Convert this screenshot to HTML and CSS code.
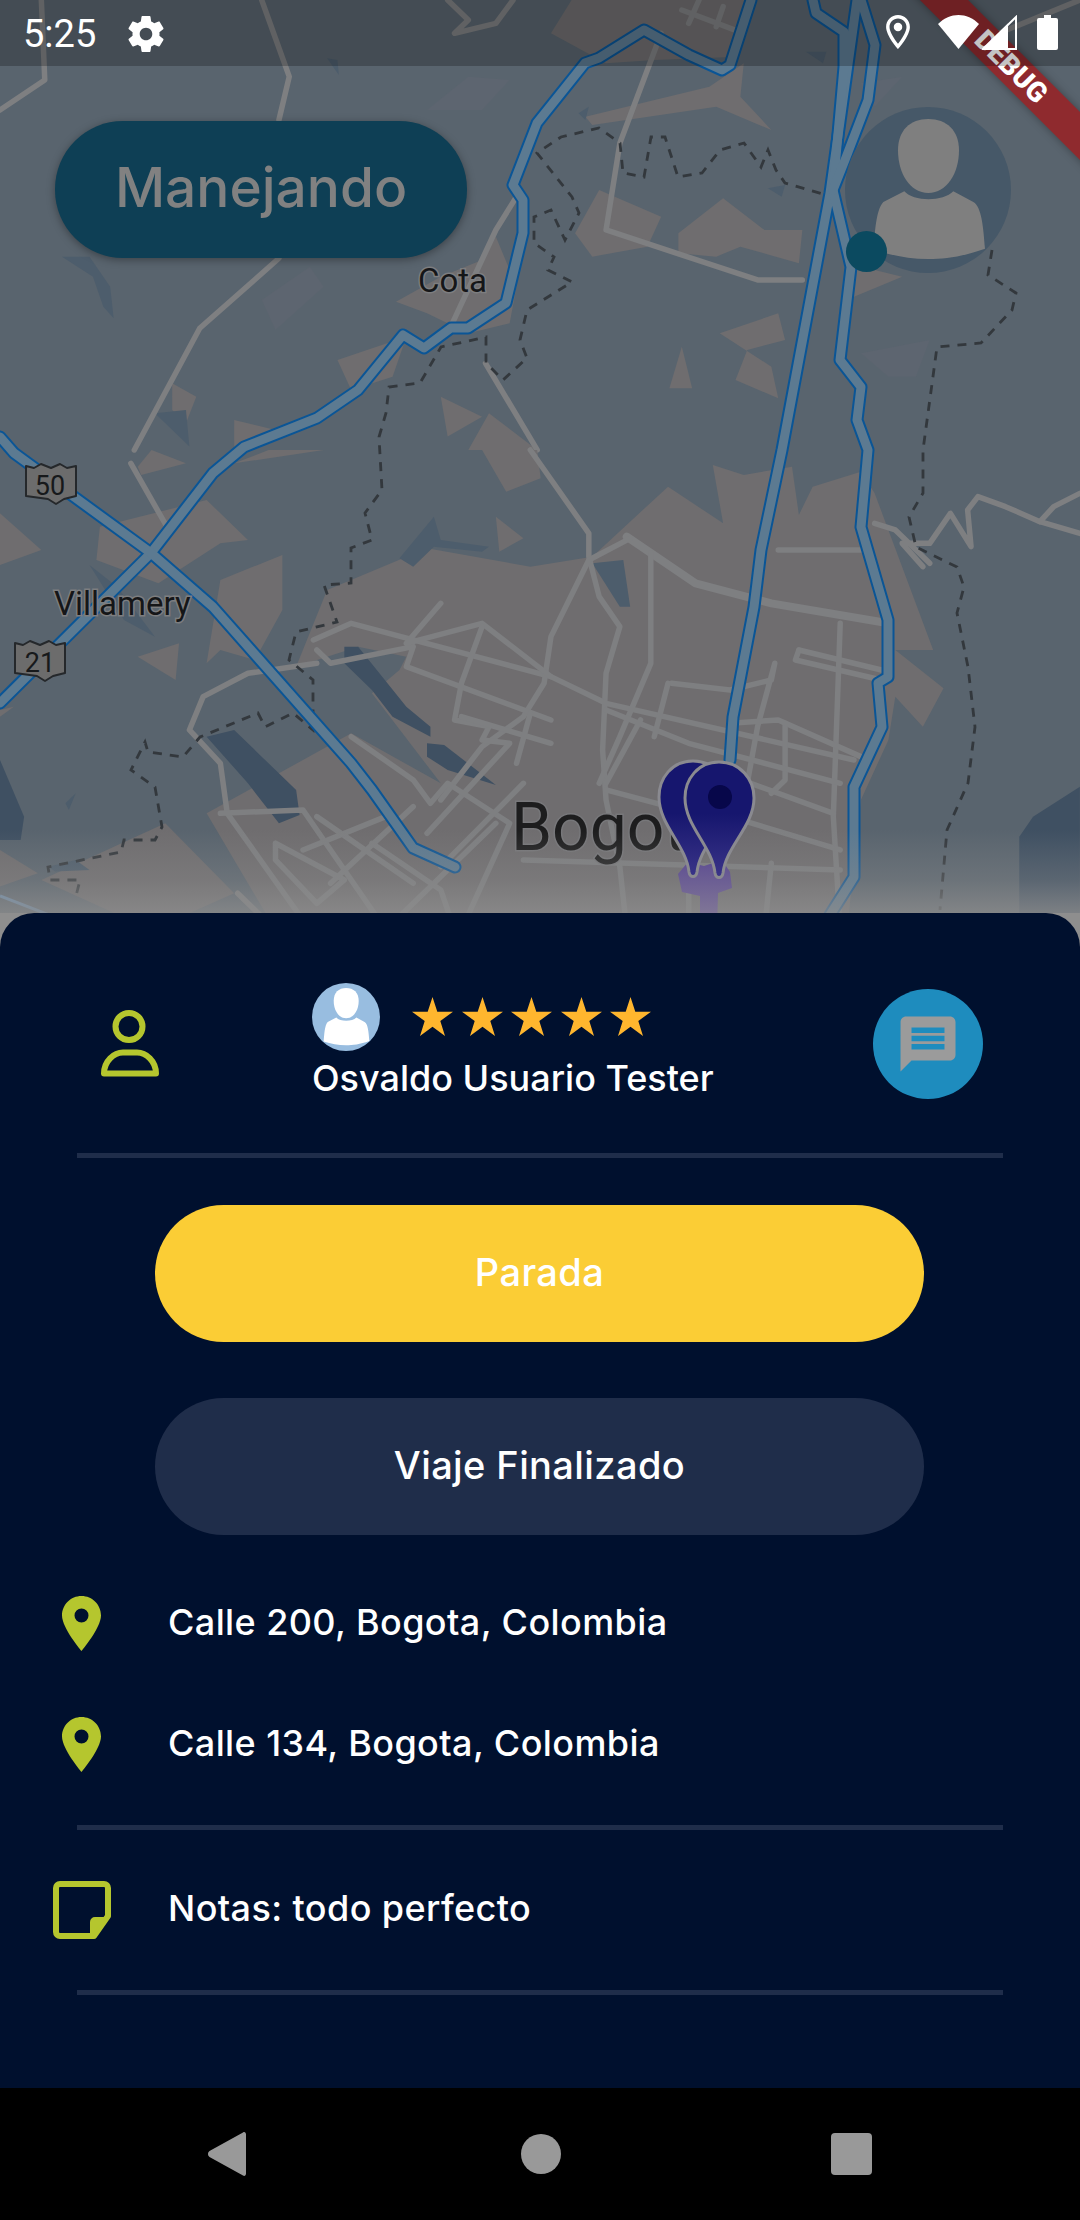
FILE: index.html
```html
<!DOCTYPE html>
<html lang="es">
<head>
<meta charset="utf-8">
<title>Manejando</title>
<link rel="stylesheet" href="styles.css">
</head>
<body>
<svg class="defs" width="0" height="0" aria-hidden="true">
  <defs>
    <symbol id="silhouette" viewBox="0 0 498 498">
      <path d="M250 36C195 36 159 70 159 130C159 200 195 258 250 258C305 258 342 200 342 130C342 70 305 36 250 36Z"/>
      <path d="M178 253C205 285 295 285 325 253L385 285C410 300 415 360 420 425C350 450 300 456 250 456C190 456 140 445 85 428C90 380 92 310 115 285Z"/>
    </symbol>
    <symbol id="star" viewBox="0 0 41 39">
      <polygon points="20.5,0 25.3,14.7 41,14.7 28.3,24 33,39 20.5,29.7 8,39 12.7,24 0,14.7 15.7,14.7"/>
    </symbol>
    <symbol id="pin" viewBox="0 0 39 55">
      <path fill-rule="evenodd" d="M19.5 0C8.7 0 0 8.7 0 19.5C0 32 19.5 55 19.5 55S39 32 39 19.5C39 8.7 30.3 0 19.5 0ZM19.5 12.5a7 7 0 1 1 0 14a7 7 0 1 1 0-14Z"/>
    </symbol>
    <linearGradient id="fade" x1="0" y1="0" x2="0" y2="1">
      <stop offset="0" stop-color="#8e8e8e" stop-opacity="0"/>
      <stop offset="0.5" stop-color="#8e8e8e" stop-opacity="0.35"/>
      <stop offset="1" stop-color="#8e8e8e" stop-opacity="1"/>
    </linearGradient>
    <linearGradient id="pinfill" x1="0" y1="0" x2="0" y2="1">
      <stop offset="0.45" stop-color="#16166e"/>
      <stop offset="1" stop-color="#3a3488"/>
    </linearGradient>
    <linearGradient id="blob" x1="0" y1="0" x2="0" y2="1">
      <stop offset="0" stop-color="#5f4f92"/>
      <stop offset="1" stop-color="#8a8298"/>
    </linearGradient>
  </defs>
</svg>

<div class="screen">
  <section class="map">
    <svg class="map-art" viewBox="0 0 1080 930" width="1080" height="930" aria-hidden="true">
      <rect class="land" x="0" y="0" width="1080" height="930"/>

      <!-- upper part: coordinates in a 1568x1350 space -->
      <g transform="scale(0.6887 0.3333)">
        <g class="urban">
          <polygon points="800,100 830,0 1090,0 1070,170 950,180 880,190"/>
          <polygon points="850,350 1030,260 1080,190 1075,290 1120,390 1040,320 860,375"/>
          <polygon points="870,570 960,650 940,740 860,770 835,700"/>
          <polygon points="1050,595 1110,690 1165,690 1160,790 1075,740 1040,770 985,760 985,700"/>
          <polygon points="720,710 750,860 740,970 680,1000 620,940 575,905 640,830 700,780"/>
          <polygon points="1045,1000 1130,940 1140,1020 1085,1050 1068,1140 1130,1195 1120,1100"/>
          <polygon points="990,1040 1005,1165 972,1165"/>
          <polygon points="1230,790 1310,830 1240,890"/>
          <polygon points="640,1190 700,1250 650,1310"/>
          <polygon points="490,1080 590,1010 570,1130 510,1170"/>
          <polygon points="710,1240 780,1350 680,1350"/>
          <polygon points="250,1150 285,1190 270,1270 250,1230"/>
          <polygon points="340,1260 400,1290 340,1350"/>
        </g>
        <g class="hill">
          <polygon points="90,770 130,770 160,860 165,955 150,920 135,830"/>
          <polygon points="1115,565 1140,555 1135,590"/>
          <polygon points="475,175 490,180 492,225"/>
          <polygon points="840,340 855,320 850,360"/>
          <polygon points="225,1240 270,1230 275,1340"/>
          <polygon points="1170,155 1200,155 1195,190"/>
        </g>
        <g class="hill-soft">
          <polygon points="620,330 680,230 740,240 700,330"/>
          <polygon points="380,900 450,800 470,860 400,990"/>
          <polygon points="1250,1060 1350,1020 1330,1130 1290,1130"/>
          <polygon points="1250,250 1310,230 1270,320"/>
        </g>
        <g class="road">
          <polyline points="380,0 420,230 405,360"/>
          <polyline points="405,775 290,985 195,1350"/>
          <polyline points="60,0 65,240 0,330"/>
          <polyline points="650,0 680,60 660,100 720,70 745,0"/>
          <polyline points="960,100 900,430 880,690 1100,840 1165,840"/>
          <polyline points="705,1090 780,1350"/>
          <polyline points="650,1000 720,690 750,590"/>
          <polyline points="990,30 1080,100"/>
          <polyline points="1015,0 1000,70"/>
          <polyline points="1050,20 1040,80"/>
          <polyline points="1450,100 1568,0"/>
        </g>
      </g>

      <!-- lower part: coordinates in a 1568x1440 space -->
      <g transform="translate(0 450) scale(0.6887 0.3333)">
        <g class="urban">
          <polygon points="475,420 620,295 770,350 860,320 970,110 1050,220 1035,45 1080,75 1150,50 1160,195 1180,110 1250,65 1270,130 1355,600 1300,600 1370,715 1340,830 1300,740 1290,870 1250,1050 1230,1440 400,1440 300,1090 510,850 640,1000 540,730 580,660 590,620 520,590 430,650"/>
          <polygon points="0,190 60,300 0,345"/>
          <polygon points="200,50 220,0 270,40 205,75"/>
          <polygon points="145,230 300,150 360,270 320,280 230,400 140,330"/>
          <polygon points="320,390 410,315 410,480 370,630 320,600 300,640"/>
          <polygon points="720,200 760,265 725,305"/>
          <polygon points="700,0 780,0 785,85 735,125"/>
          <polygon points="200,620 260,580 255,690"/>
          <polygon points="240,1120 340,1330 220,1440 60,1290"/>
          <polygon points="0,1200 55,1270 0,1310"/>
          <polygon points="390,0 470,0 340,40"/>
          <polygon points="0,780 20,770 0,800"/>
        </g>
        <g class="water">
          <polygon points="500,590 520,590 590,770 625,830 625,860 570,800 540,720 500,640"/>
          <polygon points="620,880 645,885 720,1005 650,960 620,920"/>
          <polygon points="300,860 340,840 380,920 430,1020 435,1095 405,1120 360,1000"/>
          <polygon points="1500,1100 1568,1010 1568,1440 1480,1440 1480,1160"/>
          <polygon points="0,930 35,1100 30,1170 0,1170"/>
        </g>
        <g class="hill">
          <polygon points="130,345 170,410 225,560 180,510"/>
          <polygon points="580,325 630,200 640,270 710,290 700,305 630,290 600,350"/>
          <polygon points="860,340 905,330 915,470 900,470"/>
          <polygon points="95,1060 110,1030 100,1080"/>
          <polygon points="70,1250 110,1230 130,1260 80,1265"/>
        </g>
        <g class="road">
          <polyline points="770,0 855,250 855,320 870,440 900,530 880,670 875,900 880,1050 900,1250 910,1440"/>
          <polyline points="455,570 510,520 800,680 880,760 1240,930"/>
          <polyline class="wide" points="910,260 1010,400 1120,460 1290,520"/>
          <polyline points="915,265 855,330 800,560 790,700 760,800 700,890 640,1050"/>
          <polyline points="945,310 945,640 900,860 870,1000"/>
          <polyline points="460,600 480,640 600,590 590,650 800,810"/>
          <polyline points="640,460 590,580 700,520 800,680"/>
          <polyline points="700,530 670,700 660,810 710,830 700,870 740,880 620,1150"/>
          <polyline points="975,700 1060,720 1120,690 1125,640 1100,830 1085,1000"/>
          <polyline points="1160,600 1280,660"/>
          <polyline points="1160,600 1155,630 1280,690"/>
          <polyline points="1220,520 1210,1100 1220,1440"/>
          <polyline points="1130,300 1250,300"/>
          <polyline points="190,40 245,240"/>
          <polyline points="460,640 360,670 295,740 275,840 320,940 330,1090 450,1440"/>
          <polyline points="510,860 600,990 625,1060 650,1000 740,1120 670,1440"/>
          <polyline points="320,1090 440,1080 560,1440"/>
          <polyline points="460,1100 600,1300"/>
          <polyline points="400,1180 500,1290 460,1360 400,1230 400,1180"/>
          <polyline points="1060,1100 1220,1200"/>
          <polyline points="760,1230 1220,1260"/>
          <polyline points="1140,820 1140,990 1120,1030"/>
          <polyline points="880,780 1000,880 1220,1000"/>
          <polyline points="1060,820 1130,810 1250,920"/>
          <polyline points="1568,130 1530,170 1510,215 1460,170 1420,140 1405,180 1410,290 1380,190 1350,280 1310,280 1340,350"/>
          <polyline points="1510,215 1568,250"/>
          <polyline points="1270,220 1300,240 1350,340"/>
          <polyline points="345,1330 400,1440"/>
          <polyline points="540,1180 640,1320 660,1440"/>
          <polyline points="720,1120 560,1440"/>
          <polyline points="670,800 800,880"/>
          <polyline points="770,790 750,940"/>
          <polyline points="930,810 880,1000"/>
          <polyline points="970,700 950,860"/>
          <polyline points="440,1200 560,1100"/>
          <polyline points="600,1070 480,1300"/>
          <polyline points="760,1000 640,1250"/>
          <polyline points="1090,1000 1210,1090"/>
          <polyline points="880,1020 1080,1130"/>
          <polyline points="1000,1200 1000,1440"/>
          <polyline points="1120,1240 1110,1440"/>
        </g>
      </g>

      <polyline class="trail" points="837,198 785,183 776,170 768,150 761,167 744,143 720,150 702,173 678,177 665,137 651,137 644,177 623,173 620,143 599,128 561,137 537,153 572,197 579,213 565,240 551,210 534,217 534,243 554,257 548,270 572,282 527,310 520,340 527,358 503,380 486,363 486,337 441,347 420,383 389,387 386,413 379,437 382,490 365,513 372,540 351,548 351,583 324,585 337,622 296,632 289,660 313,680 313,730 293,713 265,727 258,713 200,737 183,757 148,752 145,742 131,770 155,787 162,827 155,840 124,840 121,852 48,867 50,880 80,880 75,900"/>
      <polyline class="trail" points="992,250 988,275 1016,293 1012,310 981,343 937,347 923,450 923,493 909,517 916,547 957,567 964,587 957,613 968,667 975,727 968,783 947,830 940,910"/>

      <g>
        <polyline class="hw-out" points="751,0 730,65 722,70 689,55 644,30 599,58 585,63 537,123 513,185 523,200 523,233 506,303 468,328 451,328 424,348 403,335 358,390 317,418 244,447 213,473 151,553 0,703"/>
        <polyline class="hw-out" points="0,437 14,453 151,553 213,607 351,763 372,790 413,848 455,867"/>
        <polyline class="hw-out" points="857,0 830,193 782,450 761,550 754,607 733,717 730,760"/>
        <polyline class="hw-out" points="813,0 816,13 844,32 844,67 833,190 851,267 840,360 861,387 857,420 868,450 861,527 888,620 888,677 878,683 882,727 854,787 854,877 830,915"/>
        <polyline class="hw-out" points="861,0 875,45 868,100 845,160 833,190"/>
        <polyline class="hw-in" points="751,0 730,65 722,70 689,55 644,30 599,58 585,63 537,123 513,185 523,200 523,233 506,303 468,328 451,328 424,348 403,335 358,390 317,418 244,447 213,473 151,553 0,703"/>
        <polyline class="hw-in" points="0,437 14,453 151,553 213,607 351,763 372,790 413,848 455,867"/>
        <polyline class="hw-in" points="857,0 830,193 782,450 761,550 754,607 733,717 730,760"/>
        <polyline class="hw-in" points="813,0 816,13 844,32 844,67 833,190 851,267 840,360 861,387 857,420 868,450 861,527 888,620 888,677 878,683 882,727 854,787 854,877 830,915"/>
        <polyline class="hw-in" points="861,0 875,45 868,100 845,160 833,190"/>
      </g>

      <path class="hw-faint" d="M0 896L70 923"/>

      <g class="shield">
        <path d="M26 466l8 2l7-4l10 4l9-4l7 4l9-2v30l-12 3l-8 5l-8-5l-22-3Z"/>
        <path d="M15 643l8 2l7-4l10 4l9-4l7 4l9-2v30l-12 3l-8 5l-8-5l-22-3Z"/>
      </g>
      <text class="shield-num" x="50" y="495">50</text>
      <text class="shield-num" x="40" y="672">21</text>
      <text class="label" x="418" y="292">Cota</text>
      <text class="label" x="54" y="615">Villamery</text>
      <text class="label city" x="511" y="850">Bogot</text>

      <rect x="0" y="830" width="1080" height="100" fill="url(#fade)"/>

      <path class="blob" d="M688 862L704 866L722 860L730 872L732 888L718 893L717 930H700V896L682 892L678 874Z"/>
      <path class="pin-shape" d="M693 761C672 761 659 778 659 797C659 825 686 845 689 872C690 878 696 878 697 872C700 845 728 825 728 797C728 778 714 761 693 761Z"/>
      <path class="pin-shape" d="M719 762C698 762 685 779 685 798C685 826 712 846 715 873C716 879 722 879 723 873C726 846 754 826 754 798C754 779 740 762 719 762Z"/>
      <circle class="pin-hole" cx="720" cy="797" r="12"/>
    </svg>

    <div class="debug-ribbon"><span>DEBUG</span></div>

    <header class="status-bar">
      <span class="clock">5:25</span>
      <svg class="ic-gear" viewBox="2 2 20 20" aria-hidden="true"><path d="M19.43 12.98c.04-.32.07-.64.07-.98s-.03-.66-.07-.98l2.11-1.65c.19-.15.24-.42.12-.64l-2-3.46c-.12-.22-.39-.3-.61-.22l-2.49 1c-.52-.4-1.08-.73-1.69-.98l-.38-2.65C14.46 2.18 14.25 2 14 2h-4c-.25 0-.46.18-.49.42l-.38 2.65c-.61.25-1.17.59-1.69.98l-2.49-1c-.23-.09-.49 0-.61.22l-2 3.46c-.13.22-.07.49.12.64l2.11 1.65c-.04.32-.07.65-.07.98s.03.66.07.98l-2.11 1.65c-.19.15-.24.42-.12.64l2 3.46c.12.22.39.3.61.22l2.49-1c.52.4 1.08.73 1.69.98l.38 2.65c.03.24.24.42.49.42h4c.25 0 .46-.18.49-.42l.38-2.65c.61-.25 1.17-.59 1.69-.98l2.49 1c.23.09.49 0 .61-.22l2-3.46c.12-.22.07-.49-.12-.64l-2.11-1.65zM12 15.5c-1.93 0-3.5-1.57-3.5-3.5s1.57-3.5 3.5-3.5 3.5 1.57 3.5 3.5-1.57 3.5-3.5 3.5z"/></svg>
      <span class="status-spacer"></span>
      <svg class="ic-loc" viewBox="5 2 14 20" aria-hidden="true"><path fill-rule="evenodd" d="M12 2C8.13 2 5 5.13 5 9c0 5.25 7 13 7 13s7-7.75 7-13c0-3.87-3.13-7-7-7zM7 9c0-2.76 2.24-5 5-5s5 2.24 5 5c0 2.88-2.88 7.19-5 9.88C9.92 16.21 7 11.85 7 9z"/><circle cx="12" cy="9" r="2.5"/></svg>
      <svg class="ic-wifi" viewBox="0 0 41 34" aria-hidden="true"><path d="M0 9C12-3 29-3 41 9L20.5 34Z"/></svg>
      <svg class="ic-signal" viewBox="0 0 35 35" aria-hidden="true"><path d="M0 34.5L26 8.500V34.5Z"/><path class="sig-line" d="M1 34H34V2Z"/></svg>
      <svg class="ic-batt" viewBox="0 0 21 35" aria-hidden="true"><path d="M7 0h7v3h5a2 2 0 0 1 2 2v28a2 2 0 0 1-2 2H2a2 2 0 0 1-2-2V5a2 2 0 0 1 2-2h5Z"/></svg>
    </header>

    <div class="mode-pill">Manejando</div>
    <div class="map-avatar">
      <svg class="map-avatar-fig" aria-hidden="true"><use href="#silhouette"/></svg>
      <span class="map-avatar-dot"></span>
    </div>
  </section>

  <section class="sheet">
    <div class="driver-row">
      <svg class="ic-person" viewBox="0 0 58 67" aria-hidden="true">
        <circle cx="28" cy="16.5" r="13.5"/>
        <path d="M3 63.5C3 51 13 42.5 22 42.5H36C45 42.500 55 51 55 63.5Z"/>
      </svg>
      <div class="driver">
        <div class="driver-top">
          <svg class="driver-avatar" aria-hidden="true"><use href="#silhouette"/></svg>
          <div class="stars">
            <svg class="star" aria-hidden="true"><use href="#star"/></svg>
            <svg class="star" aria-hidden="true"><use href="#star"/></svg>
            <svg class="star" aria-hidden="true"><use href="#star"/></svg>
            <svg class="star" aria-hidden="true"><use href="#star"/></svg>
            <svg class="star" aria-hidden="true"><use href="#star"/></svg>
          </div>
        </div>
        <div class="driver-name">Osvaldo Usuario Tester</div>
      </div>
      <div class="chat-btn">
        <svg class="ic-chat" viewBox="0 0 24 24" aria-hidden="true"><path d="M20 2H4c-1.1 0-1.99.9-1.99 2L2 22l4-4h14c1.1 0 2-.9 2-2V4c0-1.1-.9-2-2-2zm-2 12H6v-2h12v2zm0-3H6V9h12v2zm0-3H6V6h12v2z"/></svg>
      </div>
    </div>
    <hr class="divider">
    <button class="btn btn-stop" type="button">Parada</button>
    <button class="btn btn-end" type="button">Viaje Finalizado</button>
    <div class="info-row first">
      <svg class="ic-pin" aria-hidden="true"><use href="#pin"/></svg>
      <span class="info-text">Calle 200, Bogota, Colombia</span>
    </div>
    <div class="info-row">
      <svg class="ic-pin" aria-hidden="true"><use href="#pin"/></svg>
      <span class="info-text">Calle 134, Bogota, Colombia</span>
    </div>
    <hr class="divider after-rows">
    <div class="info-row notes">
      <svg class="ic-note" viewBox="0 0 58 58" aria-hidden="true">
        <path d="M7 3H51a4 4 0 0 1 4 4V35L41 55H7a4 4 0 0 1-4-4V7a4 4 0 0 1 4-4Z"/>
        <path class="note-fold" d="M55 37H42a4 4 0 0 0-4 4V55L55 37Z"/>
      </svg>
      <span class="info-text">Notas: todo perfecto</span>
    </div>
    <hr class="divider">
  </section>

  <nav class="nav-bar">
    <svg class="nav-back" viewBox="0 0 38 46" aria-hidden="true"><path d="M35 1.5C36.500 .5 38 1.500 38 3.500V42.500C38 44.500 36.500 45.500 35 44.500L1.500 26C-.5 24.500-.5 21.500 1.500 20Z"/></svg>
    <span class="nav-home"></span>
    <span class="nav-recent"></span>
  </nav>
</div>
</body>
</html>
```
FILE: styles.css
```css
* { box-sizing: border-box; }
html, body { margin: 0; padding: 0; }
body { width: 1080px; height: 2220px; overflow: hidden; background: #000; font-family: "Inter", "Liberation Sans", sans-serif; }
.defs { position: absolute; }
.screen { width: 1080px; height: 2220px; display: flex; flex-direction: column; background: #8e8e8e; }

/* map */
.map { position: relative; height: 913px; flex: none; overflow: hidden; }
.map-art { position: absolute; left: 0; top: 0; display: block; }
.land { fill: #59646e; }
.urban polygon { fill: #6f6d6f; }
.hill polygon { fill: #4d5d6c; }
.hill-soft polygon { fill: #5d6570; }
.water polygon { fill: #3f5062; }
.road polyline { fill: none; stroke: #7e7f81; stroke-width: 5.5; stroke-linejoin: round; stroke-linecap: round; vector-effect: non-scaling-stroke; }
.road polyline.wide { stroke-width: 8; }
.trail { fill: none; stroke: #33383d; stroke-width: 2.8; stroke-dasharray: 9 8; }
.hw-out, .hw-in { fill: none; stroke-linejoin: round; stroke-linecap: round; }
.hw-out { stroke: #0a5596; stroke-width: 13; }
.hw-in { stroke: #5c7a91; stroke-width: 9; }
.hw-faint { fill: none; stroke: #6d93b8; stroke-width: 3; }
.shield path { fill: #6c6c6c; stroke: #25282b; stroke-width: 2; stroke-linejoin: round; }
.shield-num { font-family: "Roboto", sans-serif; font-size: 27px; fill: #17191b; text-anchor: middle; }
.label { font-family: "Roboto", sans-serif; font-size: 33px; fill: #151618; stroke: #7d7e80; stroke-width: 3px; paint-order: stroke; }
.label.city { font-size: 66px; fill: #1d1d1e; stroke: #77777a; }
.blob { fill: url(#blob); }
.pin-shape { fill: url(#pinfill); stroke: #8a8a90; stroke-width: 3; }
.pin-hole { fill: #07074a; }

.debug-ribbon { position: absolute; left: 861px; top: 50px; width: 300px; height: 34px; display: flex; align-items: center; justify-content: center; background: #8f2a2e; transform: rotate(45deg); box-shadow: 0 0 8px rgba(0,0,0,.35); }
.debug-ribbon span { font-family: "Roboto", sans-serif; font-weight: 900; font-size: 28px; line-height: 1; color: #fff; }

.status-bar { position: absolute; left: 0; top: 0; width: 1080px; height: 66px; display: flex; align-items: flex-start; background: rgba(0,0,0,.23); padding: 15px 22px 0 23px; }
.clock { font-family: "Roboto", sans-serif; font-size: 38px; line-height: 38px; color: #fff; }
.status-bar svg { fill: #fff; flex: none; display: block; }
.ic-gear { width: 36px; height: 36px; margin-left: 32px; margin-top: 1px; }
.status-spacer { flex: 1; }
.ic-loc { width: 24px; height: 34px; }
.ic-wifi { width: 41px; height: 34px; margin-left: 28px; }
.ic-signal { width: 35px; height: 35px; margin-left: 3px; }
.sig-line { fill: none; stroke: #fff; stroke-width: 2; }
.ic-batt { width: 21px; height: 35px; margin-left: 20px; }

.mode-pill { position: absolute; left: 55px; top: 121px; width: 412px; height: 137px; border-radius: 68px; background: #0e3f55; box-shadow: 0 2px 8px rgba(0,0,0,.35); color: #818181; font-size: 55px; font-weight: 500; line-height: 133px; text-align: center; }
.map-avatar { position: absolute; left: 845px; top: 107px; width: 166px; height: 166px; border-radius: 50%; background: #465868; }
.map-avatar-fig { width: 166px; height: 166px; display: block; fill: #7f7f7f; }
.map-avatar-dot { position: absolute; left: 1px; top: 124px; width: 41px; height: 41px; border-radius: 50%; background: #0b4a60; }

/* bottom sheet */
.sheet { flex: 1; background: #00102e; border-radius: 34px 34px 0 0; padding-top: 70px; display: flex; flex-direction: column; }
.driver-row { height: 170px; display: flex; align-items: flex-start; padding: 0 97px 0 101px; flex: none; }
.ic-person { width: 58px; height: 67px; margin-top: 27px; flex: none; fill: none; stroke: #b5c62e; stroke-width: 6; stroke-linejoin: round; }
.driver { margin-left: 153px; display: flex; flex-direction: column; gap: 7px; }
.driver-top { display: flex; align-items: center; gap: 32px; }
.driver-avatar { width: 68px; height: 68px; border-radius: 50%; background: #98bde0; fill: #fff; display: block; }
.stars { display: flex; gap: 8.6px; margin-top: -1px; }
.star { width: 41px; height: 39px; fill: #ffb62e; display: block; }
.driver-name { color: #fff; font-size: 36px; font-weight: 500; line-height: 40px; white-space: nowrap; }
.chat-btn { margin-left: auto; margin-top: 6px; width: 110px; height: 110px; border-radius: 50%; background: #1e8cbe; display: flex; align-items: center; justify-content: center; }
.ic-chat { width: 66px; height: 66px; fill: #9b9b9b; display: block; }

.divider { margin: 0 77px; height: 5px; border: 0; background: #1f2d4a; flex: none; }
.divider.after-rows { margin-top: 20px; }
.btn { display: block; flex: none; width: 769px; margin-left: 155px; height: 137px; border: 0; border-radius: 69px; color: #fff; font-family: inherit; font-size: 38px; font-weight: 500; letter-spacing: .4px; padding: 0 0 3px; }
.btn-stop { margin-top: 47px; background: #fbcd35; }
.btn-end { margin-top: 56px; background: #1f2d4a; }

.info-row { display: grid; grid-template-columns: 168px 1fr; align-items: center; height: 121px; flex: none; }
.info-row.first { margin-top: 28px; }
.info-row.notes { height: 160px; }
.ic-pin { width: 39px; height: 55px; margin-left: 62px; fill: #b5c62e; display: block; }
.ic-note { width: 58px; height: 58px; margin-left: 53px; fill: none; stroke: #b5c62e; stroke-width: 6; stroke-linejoin: round; display: block; }
.note-fold { fill: #b5c62e; stroke-width: 2; }
.info-text { color: #fff; font-size: 36px; font-weight: 500; letter-spacing: .4px; line-height: 40px; white-space: nowrap; margin-bottom: 4px; }

/* navigation */
.nav-bar { height: 132px; flex: none; background: #000; display: flex; align-items: center; justify-content: center; }
.nav-back { width: 38px; height: 46px; fill: #999; display: block; }
.nav-home { width: 40px; height: 40px; border-radius: 50%; background: #999; margin-left: 275px; }
.nav-recent { width: 41px; height: 42px; border-radius: 4px; background: #999; margin-left: 270px; }
```
